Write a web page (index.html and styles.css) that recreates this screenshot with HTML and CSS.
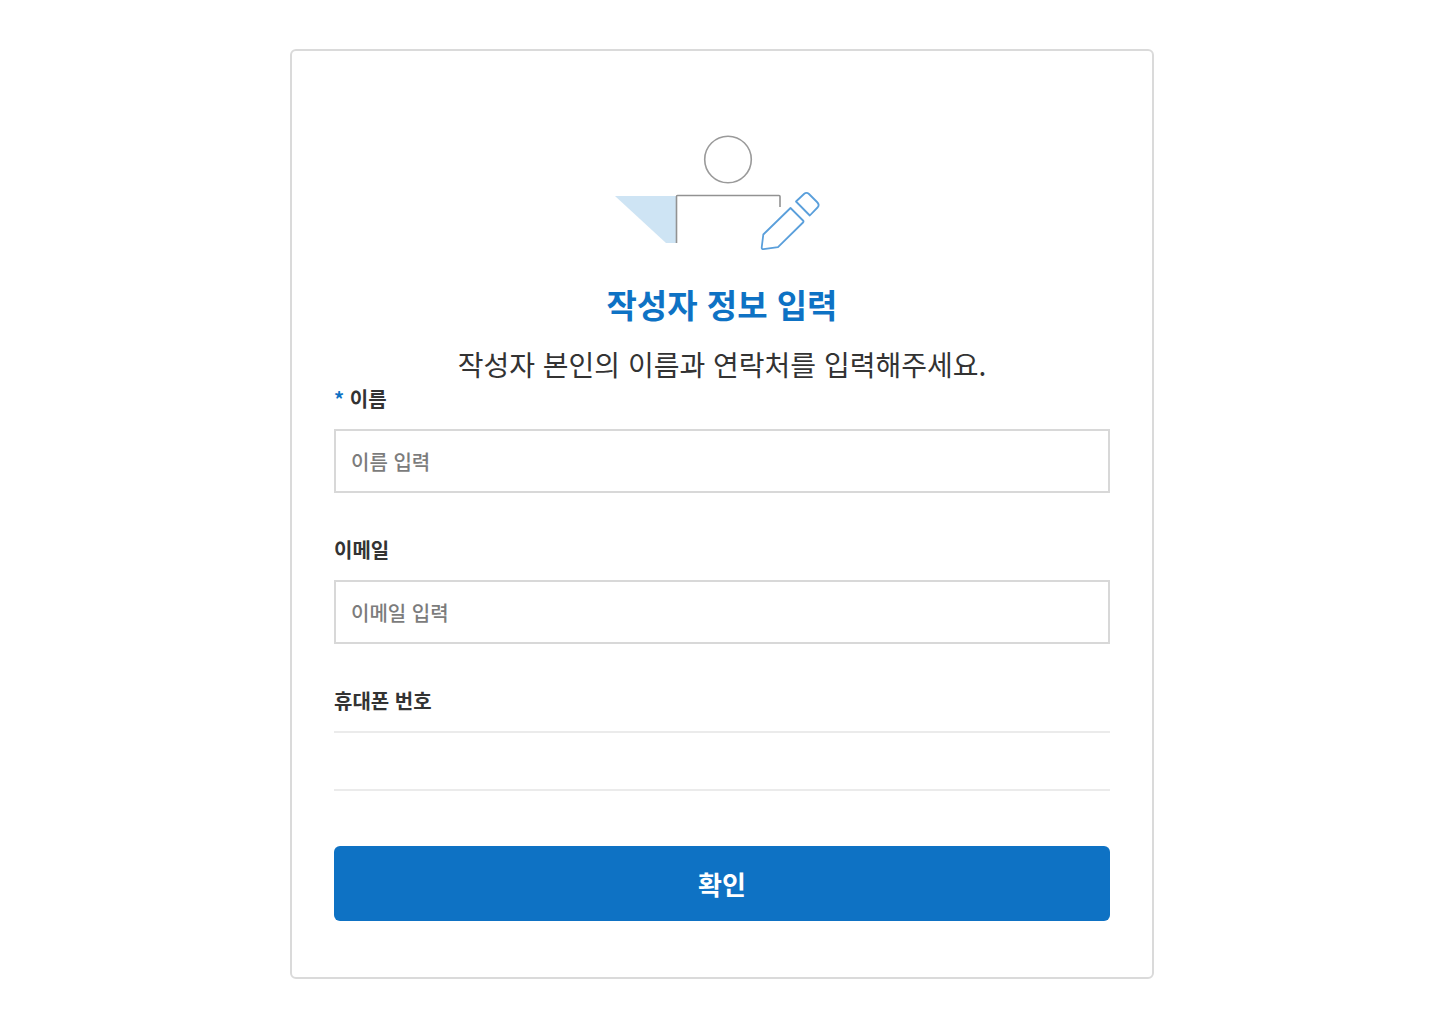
FILE: index.html
```html
<!DOCTYPE html>
<html lang="ko">
<head>
<meta charset="utf-8">
<meta name="viewport" content="width=device-width, initial-scale=1">
<title>작성자 정보 입력</title>
<link rel="stylesheet" href="styles.css">
</head>
<body>
<main class="page">
  <form class="card">
    <header class="intro">
      <svg class="intro-icon" width="208" height="120" viewBox="0 0 208 120" fill="none" aria-hidden="true">
        <path d="M1 62H62V109H52Z" fill="#cee4f4"/>
        <circle cx="114" cy="25.500" r="23.3" stroke="#9a9a9a" stroke-width="1.6"/>
        <path d="M62.500 109V62.500Q62.500 61.500 63.500 61.500H165Q166 61.500 166 62.500V73" stroke="#929292" stroke-width="1.6"/>
        <g stroke="#5a9fdb" stroke-width="1.8" stroke-linejoin="round">
          <path d="M176.500 74L189 86.500Q190 87.500 189 88.500L164 113.200L149.500 115.200Q147.700 115.400 147.700 113.500L149.300 100.500Z"/>
          <path d="M182 67.500L190 60Q192.500 57.700 195 60L203 68Q206 71 203.500 73.500L195.800 81.500Z"/>
        </g>
      </svg>
      <h1 class="title">작성자 정보 입력</h1>
      <p class="description">작성자 본인의 이름과 연락처를 입력해주세요.</p>
    </header>
    <div class="field">
      <label class="label" for="name"><span class="required">*</span> 이름</label>
      <input class="input" id="name" type="text" placeholder="이름 입력" required>
    </div>
    <div class="field">
      <label class="label" for="email">이메일</label>
      <input class="input" id="email" type="email" placeholder="이메일 입력">
    </div>
    <div class="field">
      <label class="label" for="phone">휴대폰 번호</label>
      <input class="input input-lined" id="phone" type="tel">
    </div>
    <button class="submit" type="submit">확인</button>
  </form>
</main>
</body>
</html>
```
FILE: styles.css
```css
* {
  box-sizing: border-box;
}

body {
  margin: 0;
  background: #fff;
  color: #333;
  font-family: "Noto Sans CJK KR", sans-serif;
}

.page {
  padding: 49px 16px 54px 24px;
}

.card {
  max-width: 864px;
  margin: 0 auto;
  padding: 83px 42px 56px;
  border: 2px solid #dadada;
  border-radius: 6px;
}

.intro {
  display: flex;
  flex-direction: column;
  align-items: center;
  margin-bottom: 2px;
  text-align: center;
}

.intro-icon {
  max-width: 100%;
  margin-right: 8px;
}

.title {
  margin: 24px 0 0;
  color: #0e72c4;
  font-size: 33px;
  line-height: 52px;
}

.description {
  margin: 16px 0 0;
  font-size: 28px;
  line-height: 36px;
}

.field {
  margin-bottom: 42px;
}

.label {
  display: block;
  margin-bottom: 15px;
  font-size: 20px;
  font-weight: 700;
  line-height: 30px;
}

.required {
  color: #0e72c4;
}

.input {
  display: block;
  width: 100%;
  height: 64px;
  padding: 0 15px;
  border: 2px solid #d8d8d8;
  border-radius: 0;
  background: #fff;
  color: #333;
  font: inherit;
  font-size: 20px;
}

.input::placeholder {
  color: #7c7c7c;
  font-weight: 500;
  opacity: 1;
}

.input-lined {
  height: 60px;
  border-color: #ebebeb;
  border-width: 2px 0;
}

.submit {
  display: block;
  width: 100%;
  height: 75px;
  margin-top: 55px;
  padding: 0;
  border: 0;
  border-radius: 6px;
  background: #0e72c4;
  color: #fff;
  font: inherit;
  font-size: 26px;
  font-weight: 700;
  cursor: pointer;
}
```
